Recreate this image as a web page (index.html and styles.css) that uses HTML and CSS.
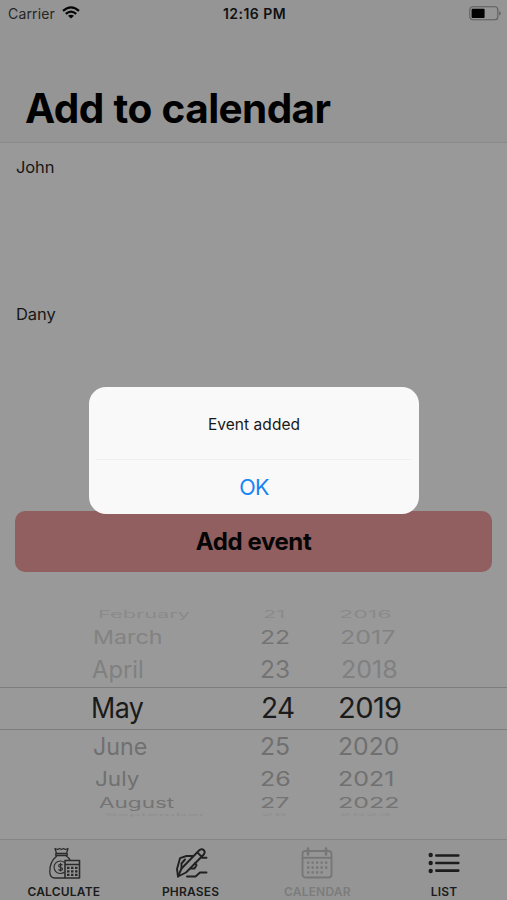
FILE: index.html
```html
<!DOCTYPE html>
<html lang="en">
<head>
<meta charset="utf-8">
<title>Add to calendar</title>
<link rel="stylesheet" href="styles.css">
</head>
<body>
<div class="screen">
  <header class="header">
    <div class="status">
      <div class="carrier"><span class="carrier-name">Carrier</span>
        <svg class="wifi" width="18" height="13" viewBox="0 0 18 13"><g fill="none" stroke="#050505" stroke-width="2.2"><path d="M1 4.800Q9-2.200 17 4.800"/><path d="M3.800 7.800Q9 3.400 14.200 7.800"/></g><path d="M9 12.600 6 9.800Q9 7.500 12 9.800Z" fill="#050505"/></svg>
      </div>
      <div class="clock">12:16 PM</div>
      <svg class="battery" width="32" height="15" viewBox="0 0 32 15"><rect x=".8" y=".8" width="28" height="13" rx="3" fill="none" stroke="#5e5e5e" stroke-width="1.1"/><rect x="2.600" y="2.700" width="13" height="9.200" rx="1" fill="#020202"/><path d="M30.200 5v4.600q1.500-.7 1.500-2.300t-1.500-2.300Z" fill="#5e5e5e"/></svg>
    </div>
    <h1 class="title">Add to calendar</h1>
  </header>
  <main class="content">
    <div class="field">John</div>
    <div class="field">Dany</div>
    <button class="add">Add event</button>
    <div class="picker">
      <div class="row r1"><span>February</span><span>21</span><span>2016</span></div>
      <div class="row r2"><span>March</span><span>22</span><span>2017</span></div>
      <div class="row r3"><span>April</span><span>23</span><span>2018</span></div>
      <div class="row selected"><span>May</span><span>24</span><span>2019</span></div>
      <div class="row r5"><span>June</span><span>25</span><span>2020</span></div>
      <div class="row r6"><span>July</span><span>26</span><span>2021</span></div>
      <div class="row r7"><span>August</span><span>27</span><span>2022</span></div>
      <div class="row r8"><span>September</span><span>28</span><span>2023</span></div>
    </div>
  </main>
  <nav class="tabs">
    <div class="tab">
      <svg class="bag" width="34" height="34" viewBox="0 0 34 34" fill="none" stroke="#2b2b2b" stroke-width="1.3" stroke-linejoin="round"><path d="M8 2.500l2.500 1 2-1 2 1 2-1 2 1 2.500-1-1.500 5h-10zM8.800 7.500h11.400v2H8.800zM10 9.800C5 14 2.500 20 2.800 26q.2 6 5 6h10M19 9.800q3 2 4.300 4.700"/><path d="M17.500 16.500a6.300 6.300 0 1 0 0 9.500M15.600 19.200c-1.500-1.400-4-.9-4 .6 0 2.100 4 1.200 4 3.100 0 1.700-2.800 2-4.200.6M13.600 17v8.500" stroke-width="1.100"/><path d="M18 14.500h14.500v17.500H18zM18 18.500h14.500" stroke-width="1.600"/><path d="M20 21.800h11.500M20 25.300h11.500M20 28.800h11.500" stroke-width="2.200" stroke-dasharray="2.500 1.500"/></svg>
      <span>CALCULATE</span>
    </div>
    <div class="tab">
      <svg width="34" height="34" viewBox="0 0 34 34" fill="none" stroke="#202020" stroke-width="1.900" stroke-linejoin="round" stroke-linecap="round"><path d="M25.500 4q2.500-1.800 4.300.2t0 4.300L12 26.500 4 30.500 7.500 22.500zM23.300 6.300l4.200 4.200"/><path d="M4 30.500 3 23 6 12.200 12.500 10H19M7.500 22.500V17.500L11 13.500M16.500 22.500h4l2-3.200-1.300-2.300M28 11.700h4.500M13 30.500h8.500l4.500-4h6.500"/></svg>
      <span>PHRASES</span>
    </div>
    <div class="tab muted">
      <svg width="34" height="34" viewBox="0 0 34 34" fill="none" stroke="#777" stroke-width="1.900"><rect x="2.500" y="5" width="29" height="26.500" rx="3"/><path d="M2.500 11.800h29"/><path d="M8 2.500v6M26 2.500v6" stroke-width="2.600" stroke-linecap="round"/><path d="M7 16.700h21M7 21.500h21M7 26.300h16.500" stroke-width="2.300" stroke-dasharray="2.300 2.200"/></svg>
      <span>CALENDAR</span>
    </div>
    <div class="tab">
      <svg width="34" height="34" viewBox="0 0 34 34" stroke="#1c1c1c" stroke-width="2.600" stroke-linecap="round"><path d="M9.300 9.500h22M9.300 17h22M9.300 24.600h22"/><g fill="#1c1c1c" stroke="none"><circle cx="3.700" cy="9" r="2.200"/><circle cx="3.700" cy="17" r="2.200"/><circle cx="3.700" cy="25" r="2.200"/></g></svg>
      <span>LIST</span>
    </div>
  </nav>
  <div class="alert" role="dialog">
    <div class="message">Event added</div>
    <div class="ok">OK</div>
  </div>
</div>
</body>
</html>
```
FILE: styles.css
```css
* { box-sizing: border-box; }
body { margin: 0; font-family: Inter, "Liberation Sans", sans-serif; }
.screen { position: relative; width: 507px; height: 900px; background: #999; overflow: hidden; display: flex; flex-direction: column; }
.header { height: 143px; background: #959595; border-bottom: 1px solid #898989; }
.status { height: 28px; padding: 0 6px 2px 8px; display: grid; grid-template-columns: 1fr auto 1fr; align-items: center; font-size: 14px; color: #111; }
.carrier { display: flex; align-items: center; gap: 7px; color: #252525; letter-spacing: .15px; }
.wifi { margin-top: -2px; }
.clock { font-weight: 600; letter-spacing: .45px; }
.battery { justify-self: end; }
.title { margin: 55px 0 0 25px; font-size: 40.500px; line-height: 52px; font-weight: 700; letter-spacing: -.6px; word-spacing: 1px; color: #000; }
.content { flex: 1; display: flex; flex-direction: column; padding-top: 14px; }
.field { height: 147px; padding-left: 16px; font-size: 16.500px; line-height: 21px; letter-spacing: -.1px; color: #171717; }
.add { margin: 60px 15px 0; height: 61px; flex: none; border: 0; border-radius: 10px; background: #915f5f; font: 700 24px Inter, sans-serif; letter-spacing: -.4px; color: #050505; }
.picker { margin-top: 33px; height: 219px; }
.row { display: grid; grid-template-columns: 169px 78px 1fr; padding-left: 92px; align-items: center; white-space: nowrap; font-size: 25px; color: #747474; }
.row span { transform-origin: left center; justify-self: start; }
.r1 { height: 18px; line-height: 18px; color: #8a8a8a; }
.r1 span { transform: translateX(6px) scale(.87, .43); }
.r1 span:nth-child(2) { transform: translateX(2px) scale(.87, .43); }
.r1 span:nth-child(3) { transform: translateX(0) scale(.93, .43); }
.r2 { height: 28px; line-height: 28px; color: #828282; }
.r2 span { transform: translateX(1px) scale(.93, .75); }
.r2 span:nth-child(2) { transform: translateX(-1px) scale(.99, .75); color: #747474; }
.r2 span:nth-child(3) { transform: translateX(1px) scale(1, .75); }
.r3 { height: 36px; line-height: 36px; color: #808080; }
.r3 span { transform: scale(.95, .95); }
.r3 span:nth-child(2) { transform: translateX(-1px) scale(.98, .95); color: #747474; }
.r3 span:nth-child(3) { transform: translateX(2px) scale(1, .95); }
.selected { height: 43px; border-top: 1px solid #7d7d7d; border-bottom: 1px solid #7d7d7d; font-size: 28px; line-height: 41px; letter-spacing: -.6px; color: #1b1b1b; }
.selected span:first-child { transform: translateX(-1px) scaleX(.96); }
.selected span:nth-child(3) { transform: translateX(-1px) scaleX(1.040); }
.r5 { height: 33px; line-height: 33px; color: #707070; }
.r5 span { transform: translateX(1px) scale(.93, .95); }
.r5 span:nth-child(n+2) { transform: translateX(-1px) scale(.99, .95); }
.r6 { height: 32px; line-height: 32px; color: #707070; }
.r6 span { transform: translateX(3px) scale(.9, .78); }
.r6 span:nth-child(n+2) { transform: translateX(-1px) scale(1, .78); }
.r7 { height: 16px; line-height: 15px; }
.r7 span { transform: translateX(7px) scale(.9, .56); }
.r7 span:nth-child(n+2) { transform: translateX(-1px) scale(1, .56); }
.r8 { height: 7px; line-height: 7px; color: #8e8e8e; }
.r8 span { transform: translateX(13px) scale(.78, .14); }
.r8 span:nth-child(n+2) { transform: translateX(0) scale(.85, .14); }
.tabs { height: 61px; border-top: 1px solid #858585; background: #959595; display: grid; grid-template-columns: repeat(4, 1fr); }
.tab { display: flex; flex-direction: column; align-items: center; padding: 6px 0 0 1px; font-size: 12px; line-height: 14px; font-weight: 600; color: #1b1b1b; letter-spacing: .2px; }
.tab span { margin-top: 5px; }
.muted { color: #7c7c7c; }
.alert { position: absolute; left: 89px; top: 387px; width: 330px; height: 127px; border-radius: 17px; background: #f9f9f9; text-align: center; }
.message { height: 73px; line-height: 75px; margin: 0 7px; border-bottom: 1px solid #f0f0f0; font-size: 15.500px; color: #181818; letter-spacing: .05px; }
.ok { height: 54px; line-height: 55px; font-size: 21.500px; letter-spacing: -.7px; color: #1684f5; }
```
